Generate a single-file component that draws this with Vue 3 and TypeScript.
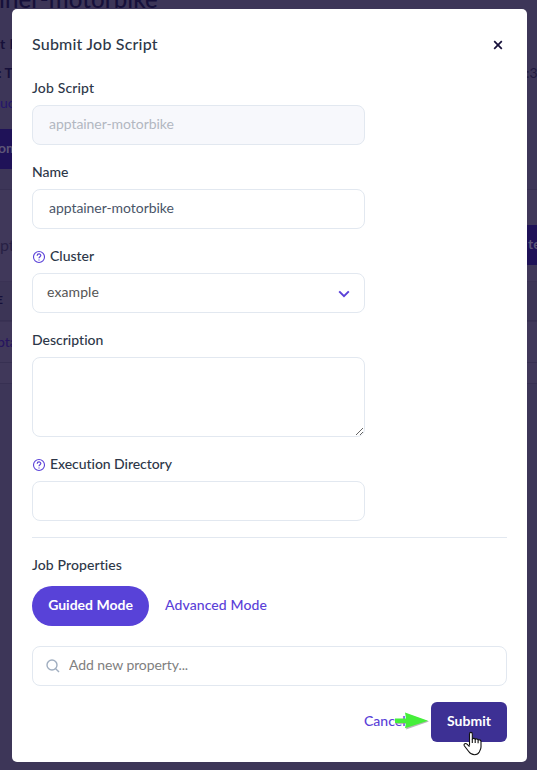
<script setup lang="ts">
import { ref } from 'vue'

const script = ref('apptainer-motorbike')
const name = ref('apptainer-motorbike')
const cluster = ref('example')
const description = ref('')
const directory = ref('')
const property = ref('')
</script>

<template>
  <div class="screen">
    <div class="page" aria-hidden="true">
      <div class="panel"></div>
      <div class="row head"></div>
      <div class="row"></div>
      <div class="row foot"></div>
      <span class="frag page-title">ainer-motorbike</span>
      <span class="frag f1">t I</span>
      <span class="frag f2">: T</span>
      <span class="frag f3">uc</span>
      <span class="frag chip chip-left">om</span>
      <span class="frag f4">pt</span>
      <span class="frag f5">E</span>
      <span class="frag f6">pta</span>
      <span class="frag f7">:3</span>
      <span class="frag chip chip-right">te</span>
    </div>

    <form class="modal" @submit.prevent>
      <header class="top">
        <h1>Submit Job Script</h1>
        <button class="close" type="button" aria-label="Close">
          <svg width="10" height="10" viewBox="0 0 10 10"><path d="M1.2 1.2 8.8 8.8M8.8 1.2 1.2 8.8" /></svg>
        </button>
      </header>

      <label class="caption wide">Job Script</label>
      <input v-model="script" class="control" disabled />

      <label class="caption">Name</label>
      <input v-model="name" class="control" />

      <label class="caption">
        <svg class="help" width="14" height="14" viewBox="0 0 14 14">
          <circle cx="7" cy="7" r="5.5" />
          <path d="M5.2 5.7C5.2 3.4 8.8 3.4 8.8 5.6 8.8 6.8 7 6.9 7 8.3M7 9.4V10.5" />
        </svg>
        <span>Cluster</span>
      </label>
      <div class="control select">
        <span>{{ cluster }}</span>
        <svg width="12" height="8" viewBox="0 0 12 8"><path d="M1.2 1.4 6 6.1 10.8 1.4" /></svg>
      </div>

      <label class="caption">Description</label>
      <textarea v-model="description" class="control area"></textarea>

      <label class="caption">
        <svg class="help" width="14" height="14" viewBox="0 0 14 14">
          <circle cx="7" cy="7" r="5.5" />
          <path d="M5.2 5.7C5.2 3.4 8.8 3.4 8.8 5.6 8.8 6.8 7 6.9 7 8.3M7 9.4V10.5" />
        </svg>
        <span class="exec">Execution Directory</span>
      </label>
      <input v-model="directory" class="control" />

      <hr />

      <h2>Job Properties</h2>
      <div class="modes">
        <button class="mode active" type="button">Guided Mode</button>
        <button class="mode" type="button">Advanced Mode</button>
      </div>

      <div class="search">
        <svg width="14" height="14" viewBox="0 0 14 14"><circle cx="6" cy="6" r="5" /><path d="M9.7 9.7 13 13" /></svg>
        <input v-model="property" placeholder="Add new property..." />
      </div>

      <footer>
        <button class="cancel" type="button">Cancel</button>
        <button class="submit" type="submit">Submit</button>
      </footer>
    </form>

    <svg class="arrow" width="36" height="20" viewBox="0 0 36 20">
      <path class="shade" d="M2 8.5H13L12 2.5 35 10.5 12 18.5 13 13H2Z" />
      <path d="M1 7.6H12L11 1.5 34 9.8 11 17.2 12 12H1Z" />
    </svg>
    <svg class="pointer" width="20" height="25" viewBox="0 0 20 25">
      <path class="hand" d="M6.5 14.5V3C6.5.8 9.3.8 9.3 3V8.5C9.5 6.8 12.1 7 12.2 8.8 12.6 7.3 15 7.6 15.1 9.5 15.6 8.3 18 8.6 18 10.6V16C18 18 16.8 19.5 16.3 21 15.3 23 13.8 23.7 11.6 23.7 8.8 23.7 7.2 22.8 5.7 20.5L1.3 14.8C.4 13 2.6 11.8 4 13.1L6.5 15.6" />
      <path class="finger" d="M9.3 8V12M12.2 8.6V12M15.1 9.4V12.2" />
    </svg>
  </div>
</template>

<style>
body {
  overflow: hidden;
}
</style>

<style scoped>
* {
  box-sizing: border-box;
}
.screen {
  position: relative;
  width: 537px;
  height: 770px;
  padding: 9px 10px 8px 12px;
  overflow: hidden;
  background: #3d3658;
  font-family: Lato, 'Liberation Sans', sans-serif;
  font-size: 14px;
  font-variant-ligatures: none;
}
.page {
  position: absolute;
  inset: 0;
}
.panel {
  position: absolute;
  top: 189px;
  left: 0;
  right: 0;
  height: 195px;
  background: #40385a;
  border-top: 1px solid #373052;
  border-bottom: 1px solid #373052;
}
.row {
  position: absolute;
  top: 321px;
  left: 0;
  right: 0;
  height: 42px;
  border-top: 1px solid #3a3254;
  border-bottom: 1px solid #373052;
}
.row.head {
  top: 281px;
  height: 40px;
  background: #3c3556;
}
.row.foot {
  top: 363px;
  height: 20px;
  border: 0;
}
.frag {
  position: absolute;
  left: 0;
  line-height: 20px;
  white-space: nowrap;
  color: #16103a;
}
.page-title {
  top: -16px;
  left: -13px;
  font-size: 24px;
  line-height: 30px;
  letter-spacing: 0.1px;
  font-weight: 500;
}
.f1 { top: 34px; font-weight: 700; letter-spacing: 0.5px; }
.f2 { top: 63px; left: -2px; font-weight: 700; }
.f3 { top: 93px; color: #26186a; font-weight: 500; }
.f4 { top: 235px; color: #272044; font-size: 16px; }
.f5 { top: 290px; left: -4px; font-size: 12px; font-weight: 700; }
.f6 { top: 332px; left: -3px; color: #26145f; font-weight: 500; }
.f7 { top: 63px; left: 526px; color: #211a40; }
.chip {
  height: 40px;
  line-height: 38px;
  background: #1f1258;
  color: #5d5677;
  font-weight: 700;
}
.chip-left { top: 129px; left: -2px; width: 20px; }
.chip-right { top: 225px; left: 517px; width: 25px; padding-left: 11px; }

.modal {
  position: relative;
  display: flex;
  flex-direction: column;
  height: 753px;
  padding: 24px 20px 20px;
  background: #fff;
  border-radius: 5px;
  color: #2d3748;
}
.top {
  display: flex;
  justify-content: space-between;
  align-items: center;
  height: 24px;
  margin-bottom: 8px;
}
h1, h2 {
  margin: 0;
  font-size: 16px;
  line-height: 24px;
  font-weight: 500;
}
h1 {
  padding-bottom: 2px;
  letter-spacing: 0.2px;
}
h2 {
  height: 24px;
  margin-top: 16px;
  font-size: 14px;
  line-height: 22px;
  letter-spacing: 0.1px;
}
button {
  padding: 0;
  border: 0;
  background: none;
  font: inherit;
}
.close {
  display: flex;
  margin-right: 4px;
}
svg {
  flex: none;
  fill: none;
}
.close path {
  stroke: #16103a;
  stroke-width: 1.7;
}
.caption {
  display: flex;
  align-items: center;
  gap: 4px;
  height: 24px;
  margin: 14px 0 6px;
  font-weight: 500;
}
.top + .caption {
  margin-top: 10px;
}
.wide {
  letter-spacing: 0.15px;
}
.exec {
  letter-spacing: -0.05px;
}
.help {
  margin-top: 3px;
  stroke: #5a41d8;
  stroke-width: 1.2;
}
.help circle {
  stroke-width: 1.1;
}
.control {
  flex: none;
  width: 333px;
  height: 40px;
  margin: 0;
  padding: 0 16px 3px;
  border: 1px solid #e2e8f0;
  border-radius: 8px;
  outline: 0;
  background: #fff;
  color: #4a5568;
  font: inherit;
  letter-spacing: -0.05px;
}
.control:disabled {
  background: #f7f8fc;
  color: #b2b7c1;
}
.select {
  display: flex;
  align-items: center;
  justify-content: space-between;
  padding: 0 14px 3px;
  color: #555;
  letter-spacing: 0.1px;
}
.select svg {
  margin-top: 4px;
  stroke: #5a41d8;
  stroke-width: 2;
}
.area {
  height: 80px;
}
hr {
  width: 100%;
  height: 1px;
  margin: 16px 0 0;
  border: 0;
  background: #e2e8f0;
}
.modes {
  display: flex;
  gap: 16px;
  margin-top: 8px;
}
.mode {
  height: 40px;
  padding-bottom: 3px;
  color: #5a41d8;
  font-weight: 500;
  letter-spacing: 0.1px;
}
.mode.active {
  width: 117px;
  border-radius: 20px;
  background: #5842d8;
  color: #fff;
  font-weight: 700;
  letter-spacing: 0;
}
.search {
  display: flex;
  align-items: center;
  gap: 9px;
  height: 40px;
  margin-top: 20px;
  padding: 0 13px;
  border: 1px solid #e2e8f0;
  border-radius: 8px;
}
.search svg {
  stroke: #a0aec0;
  stroke-width: 1.4;
}
.search input {
  flex: 1;
  padding: 0 0 3px;
  border: 0;
  outline: 0;
  font: inherit;
  letter-spacing: -0.08px;
}
.search input::placeholder {
  color: #808080;
}
footer {
  display: flex;
  justify-content: flex-end;
  gap: 22px;
  margin-top: 16px;
}
.cancel {
  width: 45px;
  padding-bottom: 4px;
  text-align: left;
  color: #5a41d8;
  font-weight: 500;
}
.submit {
  width: 76px;
  height: 40px;
  padding-bottom: 4px;
  border-radius: 6px;
  background: #3d3094;
  color: #fff;
  font-weight: 700;
}
.arrow {
  position: absolute;
  left: 394px;
  top: 711px;
  fill: #45ef3a;
}
.arrow .shade {
  fill: #999;
  opacity: 0.7;
}
.pointer {
  position: absolute;
  left: 463px;
  top: 731px;
  stroke: #111;
  stroke-width: 1.1;
}
.hand {
  fill: #fff;
}
</style>
